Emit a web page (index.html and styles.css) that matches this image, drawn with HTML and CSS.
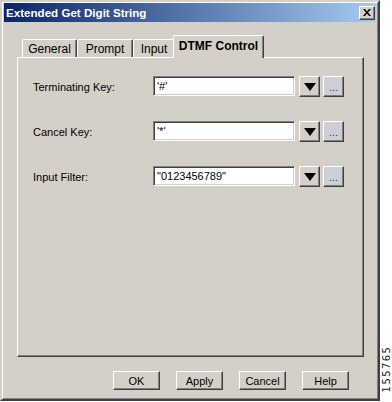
FILE: index.html
```html
<!DOCTYPE html>
<html>
<head>
<meta charset="utf-8">
<link rel="stylesheet" href="styles.css">
</head>
<body>
<div class="window">
  <div class="titlebar">
    <span class="title">Extended Get Digit String</span>
    <div class="close">
      <svg width="8" height="7" viewBox="0 0 8 7"><path d="M0 0h2l2 2.5L6 0h2L5 3.5 8 7H6L4 4.5 2 7H0l3-3.5z" fill="#000"/></svg>
    </div>
  </div>
  <div class="content">
    <div class="tabs">
      <div class="tab t-general">General</div>
      <div class="tab t-prompt">Prompt</div>
      <div class="tab t-input">Input</div>
      <div class="tab active t-dtmf">DTMF Control</div>
    </div>
    <div class="panel">
      <div class="row">
        <label class="lbl">Terminating Key:</label>
        <div class="field">'#'</div>
        <div class="btn drop"><span class="tri"></span></div>
        <div class="btn dots">...</div>
      </div>
      <div class="row">
        <label class="lbl">Cancel Key:</label>
        <div class="field">'*'</div>
        <div class="btn drop"><span class="tri"></span></div>
        <div class="btn dots">...</div>
      </div>
      <div class="row">
        <label class="lbl">Input Filter:</label>
        <div class="field">"0123456789"</div>
        <div class="btn drop"><span class="tri"></span></div>
        <div class="btn dots">...</div>
      </div>
    </div>
    <div class="buttons">
      <div class="pbtn">OK</div>
      <div class="pbtn">Apply</div>
      <div class="pbtn">Cancel</div>
      <div class="pbtn">Help</div>
    </div>
  </div>
</div>
<div class="fignum">155765</div>
</body>
</html>
```
FILE: styles.css
```css
html, body {
  margin: 0;
  padding: 0;
  background: #fff;
}
body {
  width: 392px;
  height: 402px;
  position: relative;
  overflow: hidden;
  font-family: "Liberation Sans", Arial, sans-serif;
  font-size: 11px;
  color: #000;
}
.window {
  box-sizing: border-box;
  width: 380px;
  height: 401px;
  background: #d4d0c8;
  border: 2px solid;
  border-color: #d4d0c8 #404040 #404040 #d4d0c8;
  box-shadow: inset 1px 1px #fff, inset -1px -1px #808080;
  padding: 1px 2px 2px 2px;
  display: flex;
  flex-direction: column;
}
.titlebar {
  height: 19px;
  background: linear-gradient(to right, #0a246a, #a6caf0);
  display: flex;
  align-items: center;
  justify-content: space-between;
  padding: 0 1px 0 2px;
}
.title {
  color: #fff;
  font-weight: bold;
  font-size: 11.6px;
}
.close {
  box-sizing: border-box;
  width: 16px;
  height: 14px;
  background: #d4d0c8;
  border: 1px solid;
  border-color: #fff #404040 #404040 #fff;
  box-shadow: inset -1px -1px #808080;
  display: flex;
  align-items: center;
  justify-content: center;
}
.content {
  flex: 1;
  display: flex;
  flex-direction: column;
  padding: 13px 12px 0 13px;
}
.tabs {
  display: flex;
  align-items: flex-end;
  height: 22px;
  padding-left: 5px;
  position: relative;
  z-index: 1;
}
.tab {
  box-sizing: border-box;
  height: 18px;
  border: 1px solid;
  border-bottom: none;
  border-color: #fff #404040 transparent #fff;
  box-shadow: inset -1px 0 #808080;
  border-radius: 2px 2px 0 0;
  font-size: 12px;
  display: flex;
  align-items: center;
  justify-content: center;
  padding-top: 1px;
  background: #d4d0c8;
}
.t-general { width: 55px; }
.t-prompt { width: 56px; }
.t-input { width: 42px; }
.t-dtmf {
  width: 91px;
  margin-left: -2px;
  height: 23px;
  margin-bottom: -1px;
  font-weight: bold;
  padding-bottom: 4px;
}
.panel {
  box-sizing: border-box;
  height: 300px;
  border: 1px solid;
  border-color: #fff #404040 #404040 #fff;
  box-shadow: inset -1px -1px #808080;
  padding: 18px 0 0 15px;
  display: flex;
  flex-direction: column;
  gap: 24px;
}
.row {
  display: flex;
  align-items: flex-start;
  height: 21px;
}
.lbl {
  width: 120px;
  line-height: 22px;
}
.field {
  box-sizing: border-box;
  width: 142px;
  height: 20px;
  background: #fff;
  border: 1px solid;
  border-color: #808080 #fff #fff #808080;
  box-shadow: inset 1px 1px #404040, inset -1px -1px #d4d0c8;
  padding: 0 3px;
  line-height: 18px;
  white-space: nowrap;
}
.btn {
  box-sizing: border-box;
  width: 21px;
  height: 21px;
  border: 1px solid;
  border-color: #fff #404040 #404040 #fff;
  box-shadow: inset -1px -1px #808080;
  background: #d4d0c8;
  display: flex;
  align-items: center;
  justify-content: center;
}
.drop { margin-left: 4px; }
.dots {
  margin-left: 3px;
  background: #cdced6;
  color: #404040;
  align-items: flex-end;
  line-height: 14px;
  padding-bottom: 2px;
}
.tri {
  width: 0;
  height: 0;
  border-left: 6px solid transparent;
  border-right: 6px solid transparent;
  border-top: 8px solid #000;
}
.buttons {
  display: flex;
  justify-content: flex-end;
  gap: 16px;
  padding: 14px 15px 0 0;
}
.pbtn {
  box-sizing: border-box;
  width: 47px;
  height: 19px;
  border: 1px solid;
  border-color: #fff #404040 #404040 #fff;
  box-shadow: inset -1px -1px #808080;
  display: flex;
  align-items: center;
  justify-content: center;
  font-size: 11px;
}
.fignum {
  position: absolute;
  left: 357px;
  top: 364px;
  width: 60px;
  line-height: 10px;
  transform: rotate(-90deg);
  transform-origin: center;
  font-family: "Liberation Sans Narrow", "DejaVu Sans Condensed", "Liberation Sans", sans-serif;
  font-size: 11px;
  letter-spacing: 1.5px;
  text-align: center;
  color: #222;
}
```
